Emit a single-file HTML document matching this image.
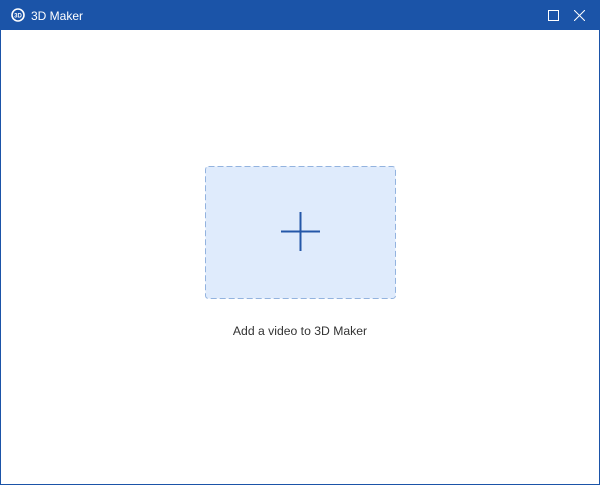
<!DOCTYPE html>
<html><head><meta charset="utf-8"><style>
html,body{margin:0;padding:0;}
body{width:600px;height:485px;position:relative;overflow:hidden;background:#fff;font-family:"Liberation Sans",sans-serif;}
.win{position:absolute;left:0;top:0;width:598px;height:484px;border:1px solid #1b54a8;border-top:none;}
.bar{position:absolute;left:0;top:0;width:600px;height:30px;background:#1b54a8;}
.title{position:absolute;left:31px;top:9px;color:#fff;font-size:12px;}
.cap{position:absolute;left:0;width:600px;top:324px;text-align:center;font-size:12.2px;color:#333;}
</style></head><body>
<div class="win"></div>
<div class="bar">
<svg style="position:absolute;left:11px;top:8px" width="14" height="14" viewBox="0 0 14 14"><circle cx="7" cy="7" r="6" fill="none" stroke="#fff" stroke-width="1.6"/><text x="7" y="9.5" font-size="6" font-family="Liberation Sans" font-weight="bold" fill="#fff" text-anchor="middle">3D</text></svg>
<div class="title">3D Maker</div>
<svg style="position:absolute;left:548px;top:10px" width="11" height="11"><rect x="0.5" y="0.5" width="10" height="10" fill="none" stroke="#fff" stroke-width="1"/></svg>
<svg style="position:absolute;left:574px;top:10px" width="11" height="11"><path d="M0 0L11 11M11 0L0 11" stroke="#fff" stroke-width="1"/></svg>
</div>
<svg style="position:absolute;left:205px;top:166px" width="191" height="133"><rect x="0.5" y="0.5" width="190" height="132" rx="3" fill="#dfebfc" stroke="#93b3df" stroke-width="1" stroke-dasharray="6 3"/></svg>
<svg style="position:absolute;left:281px;top:212px" width="40" height="40"><path d="M0 19.5H39M19.5 0V39" stroke="#2457a8" stroke-width="2"/></svg>
<div class="cap">Add a video to 3D Maker</div>
</body></html>
